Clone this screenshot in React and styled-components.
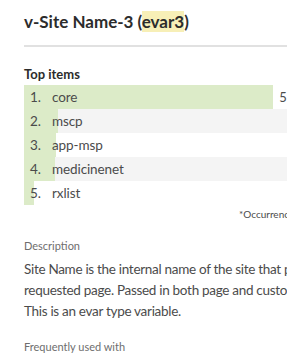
import React from "react";
import styled, { createGlobalStyle } from "styled-components";

const GlobalStyle = createGlobalStyle`
  html, body {
    margin: 0;
    padding: 0;
    background: #fff;
    overflow: hidden;
  }
  body {
    font-family: Lato, "Open Sans", sans-serif;
    color: #4b4b4b;
  }
`;

const Panel = styled.div`
  width: 360px;
  padding: 11px 0 0 24px;
  box-sizing: border-box;
`;

const Title = styled.h2`
  margin: 0;
  font-size: 17px;
  font-weight: 700;
  line-height: 22px;
  color: #2c2c2c;
  padding-bottom: 12px;
  border-bottom: 2px solid #e1e1e1;
`;

const Mark = styled.span`
  background: #f7efb7;
`;

const SectionHead = styled.div`
  margin-top: 18px;
  margin-bottom: 2px;
  font-size: 13px;
  font-weight: 700;
  color: #2c2c2c;
  line-height: 18px;
`;

const Table = styled.div`
  display: flex;
  flex-direction: column;
`;

const Row = styled.div`
  display: grid;
  grid-template-columns: 249px 1fr;
  height: 24px;
  background: ${p => (p.$shaded ? "#f4f4f4" : "#fff")};
`;

const BarCell = styled.div`
  display: flex;
  align-items: center;
  font-size: 13.5px;
  letter-spacing: -0.1px;
  background: linear-gradient(
    to right,
    #dcebc8 ${p => p.$pct}%,
    transparent ${p => p.$pct}%
  );
`;

const Rank = styled.span`
  width: 28px;
  padding-left: 6px;
  box-sizing: border-box;
`;

const Value = styled.div`
  display: flex;
  align-items: center;
  justify-content: flex-end;
  padding-right: 40px;
  font-size: 13px;
`;

const Note = styled.div`
  text-align: right;
  font-size: 10px;
  color: #4b4b4b;
  margin-top: 3px;
  padding-right: 2px;
`;

const Label = styled.div`
  font-size: 11px;
  color: #6e6e6e;
  margin-top: ${p => p.$top}px;
`;

const Text = styled.p`
  margin: 7px 0 0;
  font-size: 13.5px;
  letter-spacing: -0.3px;
  line-height: 21px;
  white-space: nowrap;
  color: #4b4b4b;
`;

const items = [
  { name: "core", value: 51324 },
  { name: "mscp", value: 6912 },
  { name: "app-msp", value: 6604 },
  { name: "medicinenet", value: 6390 },
  { name: "rxlist", value: 2011 },
];

export default function App() {
  const max = items[0].value;
  return (
    <>
      <GlobalStyle />
      <Panel>
        <Title>
          v-Site Name-3 (<Mark>evar3</Mark>)
        </Title>
        <SectionHead>Top items</SectionHead>
        <Table>
          {items.map((it, i) => (
            <Row key={it.name} $shaded={i % 2 === 1}>
              <BarCell $pct={(it.value / max) * 100}>
                <Rank>{i + 1}.</Rank>
                {it.name}
              </BarCell>
              <Value>{it.value.toLocaleString("en-US")}</Value>
            </Row>
          ))}
        </Table>
        <Note>*Occurrences (last 90 days)</Note>
        <Label $top={19}>Description</Label>
        <Text>
          Site Name is the internal name of the site that provided the
          <br />
          requested page. Passed in both page and custom link calls.
          <br />
          This is an evar type variable.
        </Text>
        <Label $top={18}>Frequently used with</Label>
      </Panel>
    </>
  );
}
